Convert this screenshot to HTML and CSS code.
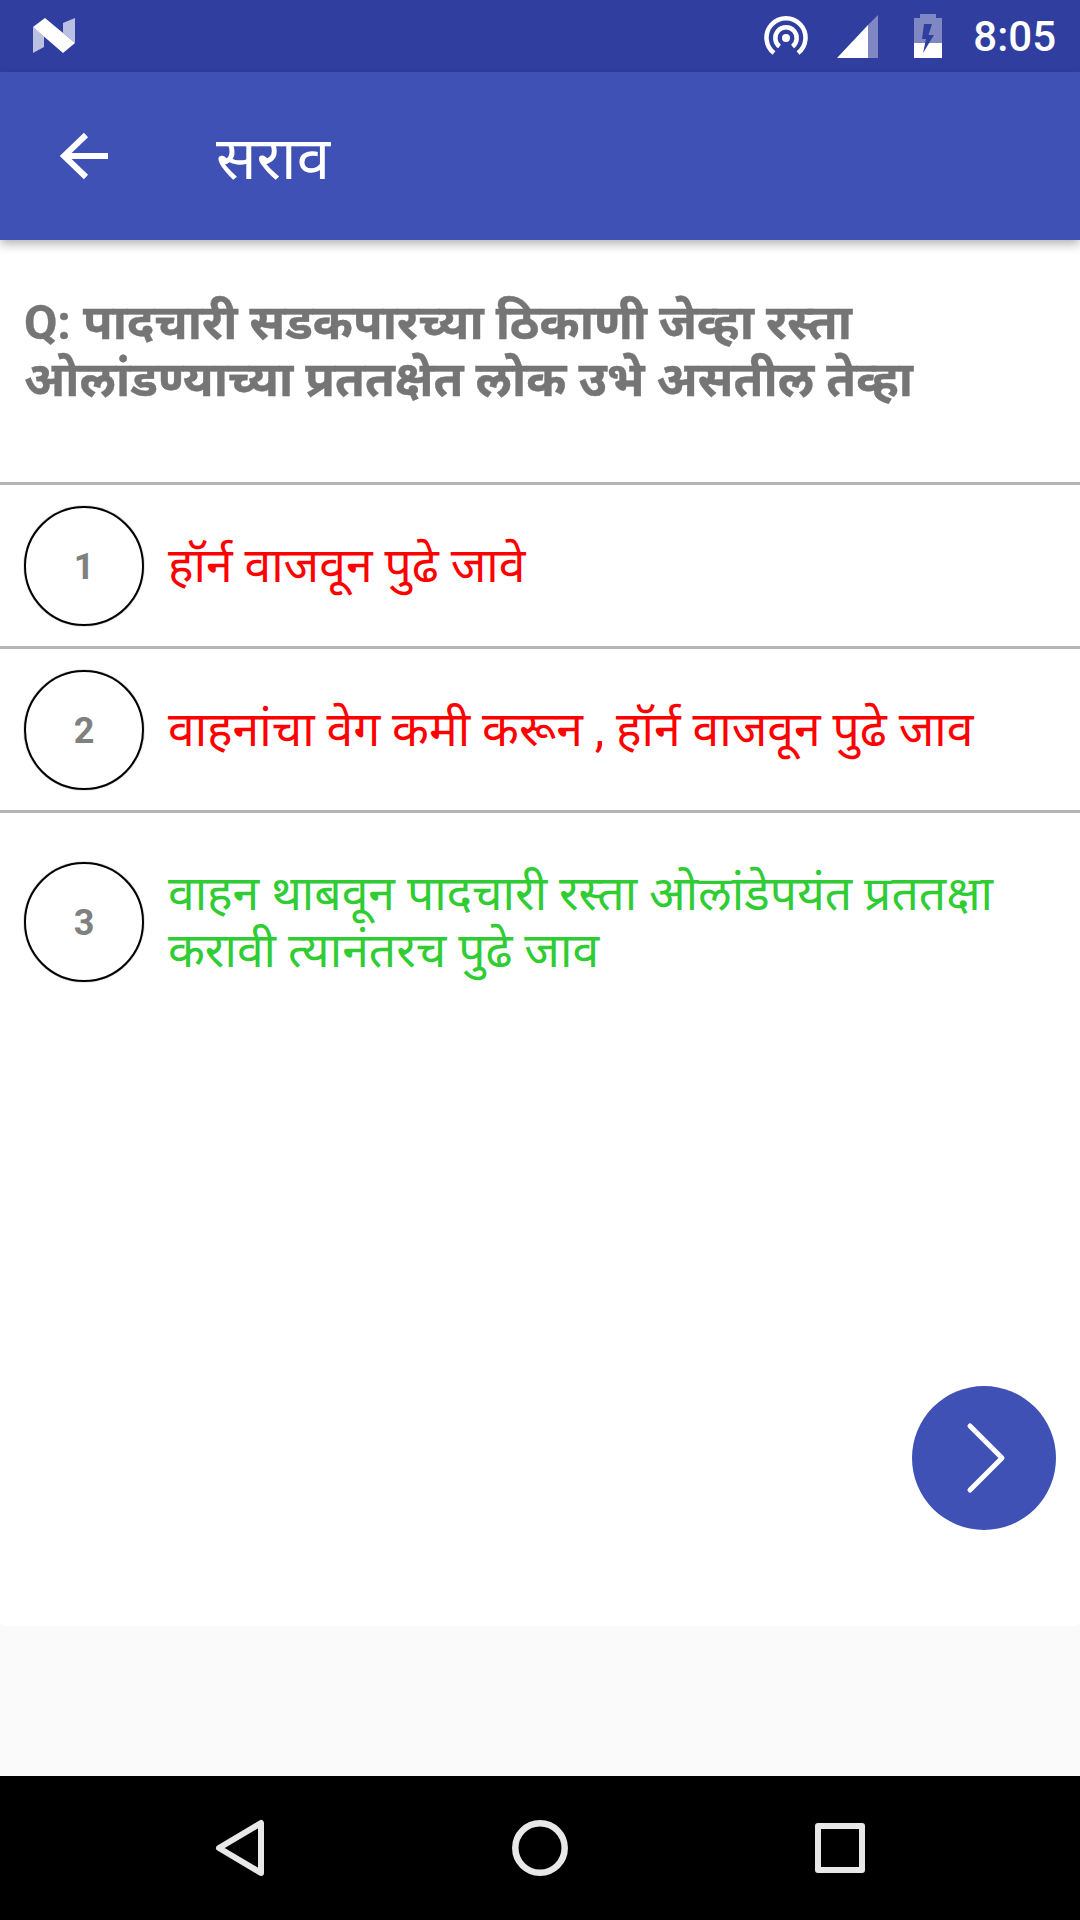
FILE: index.html
```html
<!DOCTYPE html>
<html lang="mr">

<head>
    <title>सराव</title>
    <meta name="viewport" content="initial-scale=1, width=device-width">
    <link rel="stylesheet" href="styles.css">
</head>

<body>
    <div class="status-bar">
        <svg class="n-logo" width="44" height="36" viewBox="0 0 44 36">
            <path d="M1 9 V35 L12 29 V18 Z" fill="#b9c0e2" />
            <path d="M31 5 L43 0 V25 L31 15 Z" fill="#b9c0e2" />
            <path d="M1 9 L13 0 L43 25 L31 35 Z" fill="#fff" />
        </svg>
        <div class="status-icons">
            <svg class="hotspot" width="44" height="44" viewBox="0 0 44 44" fill="none" stroke="#fff" stroke-width="4.500">
                <path d="M10 39 A19.500 19.500 0 1 1 34 39" />
                <path d="M15.500 32.500 A10.700 10.700 0 1 1 28.500 32.500" />
                <circle cx="22" cy="24" r="4" fill="#fff" stroke="none" />
            </svg>
            <svg class="signal" width="44" height="44" viewBox="0 0 44 44">
                <path d="M42 1 V44 H32 V11 Z" fill="#7f88c3" />
                <path d="M32 11 V44 H1 Z" fill="#fff" />
            </svg>
            <svg class="battery" width="30" height="44" viewBox="0 0 30 44">
                <path d="M7 0 H23 V4 H29 V44 H1 V4 H7 Z" fill="#7f88c3" />
                <path d="M1 29 H29 V44 H1 Z" fill="#fff" />
                <path d="M11 10 H19 L15.500 21 H21 L10 39 L13 25 H9 Z" fill="#303f9f" />
            </svg>
            <span class="clock">8:05</span>
        </div>
    </div>

    <div class="app-bar">
        <svg class="back" width="48" height="48" viewBox="0 0 48 48" fill="none" stroke="#fff" stroke-width="6">
            <path d="M48 24 H4" />
            <path d="M26 3 L4 24 L26 45" />
        </svg>
        <span class="app-title">सराव</span>
    </div>

    <main class="content">
        <div class="card">
            <p class="question">Q: पादचारी सडकपारच्या ठिकाणी जेव्हा रस्ता ओलांडण्याच्या प्रततक्षेत लोक उभे असतील तेव्हा</p>

            <div class="option">
                <div class="num">1</div>
                <div class="answer wrong">हॉर्न वाजवून पुढे जावे</div>
            </div>
            <div class="option">
                <div class="num">2</div>
                <div class="answer wrong">वाहनांचा वेग कमी करून , हॉर्न वाजवून पुढे जाव</div>
            </div>
            <div class="option last">
                <div class="num">3</div>
                <div class="answer right">वाहन थाबवून पादचारी रस्ता ओलांडेपयंत प्रततक्षा करावी त्यानंतरच पुढे जाव</div>
            </div>

            <button class="next">
                <svg width="44" height="72" viewBox="0 0 44 72" fill="none" stroke="#fff" stroke-width="5" stroke-linecap="round" stroke-linejoin="round">
                    <path d="M8 4 L40 36 L8 68" />
                </svg>
            </button>
        </div>
    </main>

    <div class="nav-bar">
        <svg width="54" height="60" viewBox="0 0 54 60" fill="none" stroke="#e8e8e8" stroke-width="6" stroke-linejoin="round">
            <path d="M49 5 V55 L7 30 Z" />
        </svg>
        <svg width="56" height="56" viewBox="0 0 56 56" fill="none" stroke="#e8e8e8" stroke-width="6.500">
            <circle cx="28" cy="28" r="24.700" />
        </svg>
        <svg width="52" height="50" viewBox="0 0 52 50" fill="none" stroke="#e8e8e8" stroke-width="6" stroke-linejoin="round">
            <rect x="4" y="3" width="44" height="44" />
        </svg>
    </div>
</body>
</html>
```

FILE: styles.css
```css
* {
    box-sizing: border-box;
    font-family: Roboto, "Noto Sans", sans-serif;
}

html,
body {
    margin: 0;
    padding: 0;
    background-color: #fafafa;
}

body {
    width: 1080px;
    height: 1920px;
    display: flex;
    flex-flow: column;
    overflow: hidden;
}

.status-bar {
    height: 72px;
    background-color: #303f9f;
    display: flex;
    align-items: center;
    justify-content: space-between;
    padding: 0 24px 0 32px;
}

.status-icons {
    display: flex;
    align-items: center;
}

.hotspot {
    margin-right: 28px;
}

.signal {
    margin-right: 33px;
}

.battery {
    margin-right: 30px;
}

.clock {
    color: #fff;
    font-size: 42px;
    font-weight: 500;
}

.app-bar {
    height: 168px;
    background-color: #3f51b5;
    display: flex;
    align-items: center;
    padding-left: 60px;
    box-shadow: 0 4px 10px rgba(0, 0, 0, 0.3);
    position: relative;
    z-index: 1;
}

.app-title {
    color: #fff;
    font-size: 60px;
    margin-left: 108px;
}

.content {
    flex: 1;
    display: flex;
    flex-flow: column;
}

.card {
    height: 1386px;
    background-color: #fff;
    border-radius: 0 0 6px 6px;
    position: relative;
}

.question {
    margin: 0;
    height: 245px;
    padding: 54px 24px 0;
    color: #757575;
    font-size: 48.400px;
    font-weight: bold;
    line-height: 57px;
    -webkit-text-stroke: 0.4px #757575;
    border-bottom: 3px solid #b4b4b4;
}

.option {
    display: flex;
    align-items: center;
    height: 164px;
    padding: 0 24px;
    border-bottom: 3px solid #b4b4b4;
}

.option.last {
    height: 224px;
    border-bottom: 0;
    padding-bottom: 6px;
}

.num {
    width: 120px;
    height: 120px;
    flex: none;
    padding-top: 2px;
    border: 2px solid #000;
    border-radius: 50%;
    box-shadow: 0 0 1px #000;
    display: flex;
    align-items: center;
    justify-content: center;
    color: #808080;
    font-size: 36px;
    font-weight: bold;
}

.answer {
    margin-left: 24px;
    font-size: 48px;
    line-height: 57px;
}

.wrong {
    color: #f00;
}

.right {
    color: #2fcc33;
}

.next {
    position: absolute;
    right: 24px;
    bottom: 96px;
    width: 144px;
    height: 144px;
    border: 0;
    padding: 0;
    border-radius: 50%;
    background-color: #3f51b5;
    display: flex;
    align-items: center;
    justify-content: center;
}

.nav-bar {
    height: 144px;
    background-color: #000;
    display: flex;
    align-items: center;
    gap: 246px;
    padding-left: 212px;
}
```
